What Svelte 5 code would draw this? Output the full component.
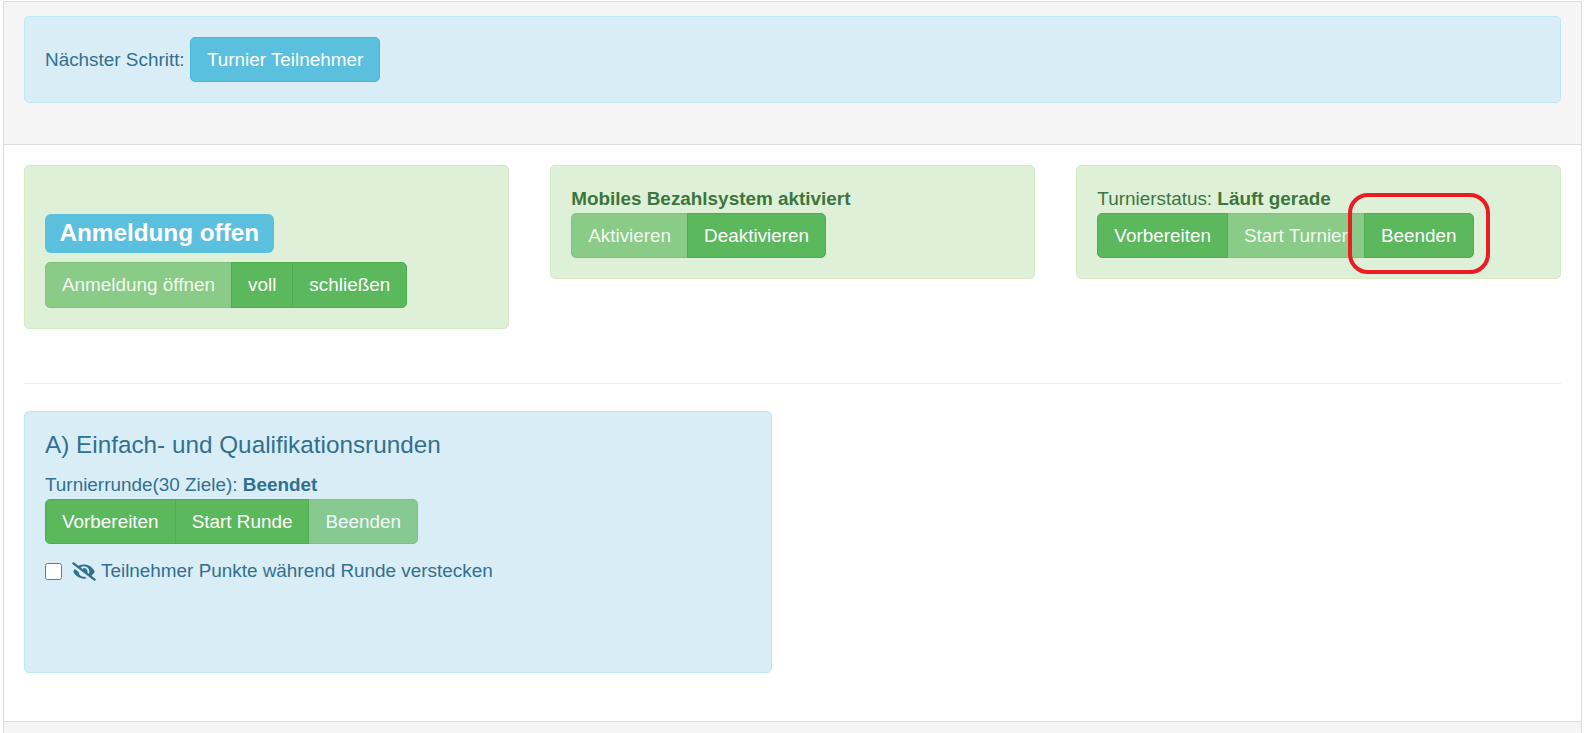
<script>
    const statusGroups = [
        {
            id: "payment",
            text: "",
            strong: "Mobiles Bezahlsystem aktiviert",
            buttons: [
                { label: "Aktivieren", disabled: true },
                { label: "Deaktivieren", disabled: false },
            ],
        },
        {
            id: "tournament",
            text: "Turnierstatus: ",
            strong: "Läuft gerade",
            buttons: [
                { label: "Vorbereiten", disabled: false },
                { label: "Start Turnier", disabled: true },
                { label: "Beenden", disabled: false },
            ],
        },
    ];

    const registration = [
        { label: "Anmeldung öffnen", disabled: true },
        { label: "voll", disabled: false },
        { label: "schließen", disabled: false },
    ];

    const round = [
        { label: "Vorbereiten", disabled: false },
        { label: "Start Runde", disabled: false },
        { label: "Beenden", disabled: true },
    ];
</script>

{#snippet group(buttons)}
    <div class="btn-group">
        {#each buttons as btn}
            <button type="button" class="btn btn-success" class:disabled={btn.disabled}>{btn.label}</button>
        {/each}
    </div>
{/snippet}

<div class="panel">
    <div class="panel-heading">
        <div class="alert alert-info next-step">
            Nächster Schritt:
            <button type="button" class="btn btn-info">Turnier Teilnehmer</button>
        </div>
    </div>

    <div class="panel-body">
        <div class="status-row">
            <div class="alert alert-success">
                <h3 class="reg-title"><span class="label">Anmeldung offen</span></h3>
                {@render group(registration)}
            </div>

            {#each statusGroups as item (item.id)}
                <div class="alert alert-success status-card">
                    <div>{item.text}<b>{item.strong}</b></div>
                    {@render group(item.buttons)}
                </div>
            {/each}
        </div>

        <hr />

        <div class="round-row">
            <div class="alert alert-info round-card">
                <h4>A) Einfach- und Qualifikationsrunden</h4>
                <div>Turnierrunde(30 Ziele): <b>Beendet</b></div>
                {@render group(round)}
                <label class="hide-points">
                    <input type="checkbox" />
                    <svg class="eye" viewBox="0 0 640 512" aria-hidden="true">
                        <path
                            fill="currentColor"
                            d="M320 400c-75.85 0-137.25-58.71-142.9-133.11L72.2 185.82c-13.79 17.3-26.48 35.59-36.72 55.59a32.35 32.35 0 0 0 0 29.19C89.71 376.41 197.07 448 320 448c26.91 0 52.87-4 77.89-10.46L346 397.39a144.13 144.13 0 0 1-26 2.61zm313.82 58.1l-110.55-85.44a331.25 331.25 0 0 0 81.25-102.07 32.35 32.35 0 0 0 0-29.19C550.29 135.59 442.93 64 320 64a308.15 308.15 0 0 0-147.32 37.7L45.46 3.37A16 16 0 0 0 23 6.18L3.37 31.45A16 16 0 0 0 6.18 53.9l588.36 454.73a16 16 0 0 0 22.46-2.81l19.64-25.27a16 16 0 0 0-2.82-22.45zm-183.72-142l-39.3-30.38A94.75 94.75 0 0 0 416 256a94.76 94.76 0 0 0-121.31-92.21A47.65 47.65 0 0 1 304 192a46.64 46.64 0 0 1-1.54 10l-73.61-56.89A142.31 142.31 0 0 1 320 112a143.92 143.92 0 0 1 144 144c0 21.63-5.29 41.79-13.9 60.11z"
                        />
                    </svg>
                    Teilnehmer Punkte während Runde verstecken
                </label>
            </div>
        </div>
    </div>

    <div class="panel-footer"></div>
</div>

<!-- red marker drawn over the screenshot -->
<div class="marker"></div>

<style>
    :global(body) {
        margin: 0;
        background: #fff;
        overflow: hidden;
    }

    .panel {
        margin: 1px 13px 0 3px;
        height: 732px;
        box-sizing: border-box;
        border: 1px solid #ddd;
        border-bottom: 0;
        display: flex;
        flex-direction: column;
        font-family: "Liberation Sans", Arial, sans-serif;
        font-size: 18.9px;
        line-height: 26.67px;
        color: #333;
    }

    .panel-heading {
        background: #f5f5f5;
        border-bottom: 1px solid #ddd;
        padding: 14px 20px 41px;
    }

    .panel-body {
        flex: 1;
        padding: 20px 20px 0;
    }

    .panel-footer {
        height: 11px;
        background: #f5f5f5;
        border-top: 1px solid #ddd;
    }

    .alert {
        box-sizing: border-box;
        padding: 20px;
        border: 1px solid transparent;
        border-radius: 5px;
    }

    .alert-info {
        background: #d9edf7;
        border-color: #bce8f1;
        color: #31708f;
    }

    .alert-success {
        background: #dff0d8;
        border-color: #d6e9c6;
        color: #3c763d;
    }

    .status-row {
        display: grid;
        grid-template-columns: repeat(3, 1fr);
        gap: 41.5px;
        align-items: start;
        padding-bottom: 27px;
    }

    .reg-title {
        margin: 26px 0 15px;
        font-size: 32px;
        line-height: 35px;
        font-weight: 500;
    }

    .label {
        background: #5bc0de;
        color: #fff;
        font-size: 24.3px;
        font-weight: 700;
        line-height: 1;
        padding: 4.8px 14.4px 7.2px;
        border-radius: 6px;
    }

    .btn-group {
        display: flex;
        width: max-content;
    }

    .btn {
        box-sizing: border-box;
        height: 45.33px;
        padding: 1px 16px 0;
        border: 1px solid transparent;
        border-radius: 5px;
        font-family: inherit;
        font-size: 18.9px;
        line-height: 26.67px;
        color: #fff;
        white-space: nowrap;
    }

    .btn-info {
        background: #5bc0de;
        border-color: #46b8da;
    }

    .btn-success {
        background: #5cb85c;
        border-color: #4cae4c;
    }

    .btn.disabled {
        opacity: 0.65;
    }

    .btn-group .btn {
        border-radius: 0;
        margin-left: -1px;
    }

    .btn-group .btn:first-child {
        margin-left: 0;
        border-radius: 5px 0 0 5px;
    }

    .btn-group .btn:last-child {
        border-radius: 0 5px 5px 0;
    }

    hr {
        margin: 0 0 27px;
        padding-top: 27px;
        border: 0;
        border-bottom: 1px solid #eee;
    }

    .round-row {
        display: grid;
        grid-template-columns: 748px;
    }

    .round-card {
        height: 262px;
    }

    h4 {
        margin: 0 0 14px;
        font-size: 24.3px;
        line-height: 26.4px;
        font-weight: 500;
    }

    .hide-points {
        display: flex;
        align-items: center;
        margin-top: 14px;
    }

    .hide-points input {
        width: 17px;
        height: 17px;
        margin: 0 10px 0 0;
    }

    .eye {
        width: 24px;
        height: 19px;
        margin-right: 5px;
    }

    .marker {
        position: absolute;
        left: 1348px;
        top: 193px;
        width: 142px;
        height: 81px;
        box-sizing: border-box;
        border: 4px solid #ed1c24;
        border-radius: 20px;
        pointer-events: none;
    }
</style>
